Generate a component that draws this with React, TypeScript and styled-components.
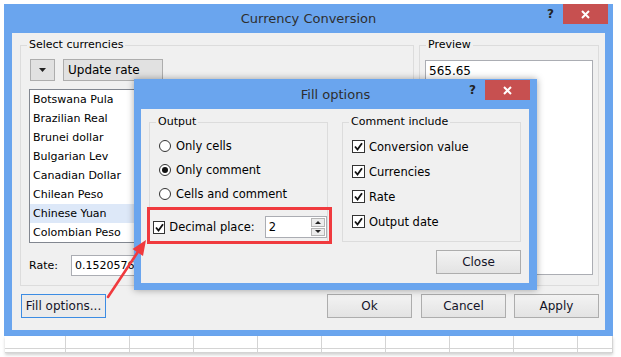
import styled, { createGlobalStyle } from "styled-components";

const GlobalStyle = createGlobalStyle`
  html, body {
    margin: 0;
    padding: 0;
    background: #ffffff;
  }
  body {
    font-family: "DejaVu Sans", Verdana, sans-serif;
    font-size: 11px;
    color: #000;
  }
`;

const Page = styled.div`
  position: relative;
  width: 621px;
  height: 357px;
  overflow: hidden;
  padding: 4px 0 0 4px;
  box-sizing: border-box;
  background: #fff;
`;

const Window = styled.div`
  width: 609px;
  background: #6aa5ee;
  display: flex;
  flex-direction: column;
`;

const TitleBar = styled.div<{ $h: number }>`
  height: ${(p) => p.$h}px;
  display: grid;
  grid-template-columns: 1fr auto 1fr;
  align-items: start;
`;

const Title = styled.div`
  align-self: center;
  font-size: 13px;
  color: #2e2e2e;
`;

const Controls = styled.div<{ $right: number; $top: number }>`
  justify-self: end;
  display: flex;
  align-items: flex-start;
  margin-right: ${(p) => p.$right}px;
  margin-top: ${(p) => p.$top}px;
`;

const HelpMark = styled.span`
  height: 20px;
  line-height: 20px;
  font-size: 12px;
  font-weight: bold;
  color: #222;
  margin-right: 9px;
`;

const CloseBox = styled.div`
  width: 45px;
  height: 20px;
  background: #c75050;
  display: flex;
  align-items: center;
  justify-content: center;
`;

const Body = styled.div`
  margin: 0 8px 6px 8px;
  height: 297px;
  background: #f0f0f0;
  padding: 12px 6px 0 8px;
  box-sizing: border-box;
`;

const GroupRow = styled.div<{ $gap: number }>`
  display: flex;
  gap: ${(p) => p.$gap}px;
`;

const GroupBox = styled.div<{ $w: number; $h: number }>`
  width: ${(p) => p.$w}px;
  height: ${(p) => p.$h}px;
  border: 1px solid #dcdcdc;
  box-sizing: border-box;
`;

const Legend = styled.div`
  width: fit-content;
  margin: -8px 0 0 6px;
  padding: 0 2px;
  line-height: 14px;
  background: #f0f0f0;
`;

const GroupContent = styled.div<{ $pad: string }>`
  padding: ${(p) => p.$pad};
`;

const ToolRow = styled.div`
  display: flex;
  gap: 8px;
  margin-left: 1px;
`;

const FlatButton = styled.div<{ $w: number }>`
  width: ${(p) => p.$w}px;
  height: 22px;
  box-sizing: border-box;
  border: 1px solid #adadad;
  background: #e1e1e1;
  display: flex;
  align-items: center;
  justify-content: ${(p) => (p.$w < 40 ? "center" : "flex-start")};
  padding-left: ${(p) => (p.$w < 40 ? 0 : 4)}px;
  font-size: 12px;
`;

const ListBox = styled.div`
  margin-top: 8px;
  width: 200px;
  height: 154px;
  box-sizing: border-box;
  border: 1px solid #828790;
  background: #fff;
`;

const ListItem = styled.div<{ $selected?: boolean }>`
  height: 19px;
  line-height: 19px;
  padding-left: 3px;
  background: ${(p) => (p.$selected ? "#dde8f8" : "transparent")};
  white-space: nowrap;
`;

const RateRow = styled.div`
  margin-top: 12px;
  display: flex;
  align-items: center;
`;

const RateLabel = styled.span`
  width: 42px;
`;

const TextInput = styled.div<{ $w: number; $h: number }>`
  width: ${(p) => p.$w}px;
  height: ${(p) => p.$h}px;
  box-sizing: border-box;
  border: 1px solid #abadb3;
  background: #fff;
  padding-left: 3px;
  display: flex;
  align-items: center;
  position: relative;
`;

const PreviewBox = styled.div`
  margin: 8px 5px 0 5px;
  height: 215px;
  box-sizing: border-box;
  border: 1px solid #abadb3;
  background: #fff;
  padding: 3px 3px;
  line-height: 14px;
  font-size: 12px;
`;

const ButtonRow = styled.div`
  margin-top: 8px;
  display: flex;
  align-items: center;
`;

const PushButton = styled.div<{ $focused?: boolean; $gap?: number }>`
  width: 85px;
  height: 24px;
  box-sizing: border-box;
  margin-left: ${(p) => p.$gap ?? 0}px;
  border: 1px solid ${(p) => (p.$focused ? "#3c8ce3" : "#adadad")};
  background: ${(p) =>
    p.$focused ? "#ebebeb" : "linear-gradient(#f3f3f3, #e3e3e3)"};
  display: flex;
  align-items: center;
  justify-content: center;
  color: #141428;
  font-size: 12px;
`;

const Spacer = styled.div`
  flex: 1;
`;

const FillWindow = styled.div`
  position: absolute;
  left: 134px;
  top: 79px;
  width: 403px;
  height: 211px;
  background: #6aa5ee;
  box-shadow: 0 0 7px rgba(0, 0, 0, 0.35);
  display: flex;
  flex-direction: column;
`;

const FillBody = styled.div`
  flex: 1;
  margin: 0 8px 7px 7px;
  background: #f0f0f0;
  padding: 13px 8px 0 8px;
  box-sizing: border-box;
`;

const OptionRow = styled.div<{ $h: number }>`
  height: ${(p) => p.$h}px;
  display: flex;
  align-items: center;
  white-space: nowrap;
  font-size: 11.5px;
`;

const Radio = styled.span<{ $checked?: boolean }>`
  width: 12px;
  height: 12px;
  box-sizing: border-box;
  border-radius: 50%;
  border: 1px solid #333;
  background: #fff;
  margin-right: 5px;
  display: flex;
  align-items: center;
  justify-content: center;
  &::after {
    content: "";
    width: 6px;
    height: 6px;
    border-radius: 50%;
    background: ${(p) => (p.$checked ? "#111" : "transparent")};
  }
`;

const CheckBox = styled.span`
  width: 13px;
  height: 13px;
  box-sizing: border-box;
  border: 1px solid #333;
  background: #fff;
  margin-right: 4px;
  display: flex;
  align-items: center;
  justify-content: center;
`;

const DecimalRow = styled(OptionRow)`
  margin: 10px 0 0 -6px;
`;

const SpinBox = styled(TextInput)`
  margin-left: 10px;
`;

const SpinButtons = styled.div`
  position: absolute;
  right: 1px;
  top: 1px;
  bottom: 1px;
  width: 14px;
  display: flex;
  flex-direction: column;
  gap: 1px;
`;

const SpinButton = styled.div`
  flex: 1;
  border: 1px solid #b5b5b5;
  background: #ececec;
  display: flex;
  align-items: center;
  justify-content: center;
`;

const CloseRow = styled.div`
  margin-top: 8px;
  display: flex;
  justify-content: flex-end;
`;

const Highlight = styled.div`
  position: absolute;
  left: 147px;
  top: 207px;
  width: 185px;
  height: 37px;
  box-sizing: border-box;
  border: 3px solid #f03a3e;
`;

const Annotation = styled.svg`
  position: absolute;
  left: 0;
  top: 0;
  pointer-events: none;
`;

const Sheet = styled.div`
  margin-left: 1px;
  width: 608px;
  box-shadow: 0 2px 3px rgba(0, 0, 0, 0.18);
`;

const SheetRow = styled.div<{ $h: number }>`
  display: flex;
  height: ${(p) => p.$h}px;
  border-bottom: 1px solid #d4d4d4;
  background: #fff;
`;

const SheetCell = styled.div<{ $w: number }>`
  width: ${(p) => p.$w}px;
  flex: none;
  border-right: 1px solid #d4d4d4;
  box-sizing: border-box;
`;

const currencies = [
  "Botswana Pula",
  "Brazilian Real",
  "Brunei dollar",
  "Bulgarian Lev",
  "Canadian Dollar",
  "Chilean Peso",
  "Chinese Yuan",
  "Colombian Peso",
];

const outputs = [
  { label: "Only cells", checked: false },
  { label: "Only comment", checked: true },
  { label: "Cells and comment", checked: false },
];

const includes = ["Conversion value", "Currencies", "Rate", "Output date"];

const cellWidths = [61, 64, 64, 64, 64, 64, 64, 64, 64, 35];

const CloseIcon = () => (
  <svg width="9" height="9" viewBox="0 0 9 9">
    <path d="M1 1 L8 8 M8 1 L1 8" stroke="#fff" strokeWidth="2" />
  </svg>
);

const Check = () => (
  <svg width="9" height="9" viewBox="0 0 9 9">
    <path d="M1 4.5 L3.5 7.5 L8 1.2" stroke="#111" strokeWidth="1.8" fill="none" />
  </svg>
);

const Tri = ({ up, w = 7, h = 4 }: { up?: boolean; w?: number; h?: number }) => (
  <svg width={w} height={h} viewBox={`0 0 ${w} ${h}`}>
    <path
      d={up ? `M0 ${h} L${w / 2} 0 L${w} ${h} Z` : `M0 0 L${w} 0 L${w / 2} ${h} Z`}
      fill="#222"
    />
  </svg>
);

function SheetRows() {
  return (
    <Sheet>
      {[12, 3].map((h, r) => (
        <SheetRow key={r} $h={h}>
          {cellWidths.map((w, i) => (
            <SheetCell key={i} $w={w} />
          ))}
        </SheetRow>
      ))}
    </Sheet>
  );
}

function FillOptions() {
  return (
    <FillWindow>
      <TitleBar $h={30}>
        <div />
        <Title>Fill options</Title>
        <Controls $right={7} $top={1}>
          <HelpMark>?</HelpMark>
          <CloseBox>
            <CloseIcon />
          </CloseBox>
        </Controls>
      </TitleBar>
      <FillBody>
        <GroupRow $gap={14}>
          <GroupBox $w={179} $h={120}>
            <Legend>Output</Legend>
            <GroupContent $pad="5px 0 0 9px">
              {outputs.map((o) => (
                <OptionRow key={o.label} $h={24}>
                  <Radio $checked={o.checked} />
                  {o.label}
                </OptionRow>
              ))}
              <DecimalRow $h={22}>
                <CheckBox>
                  <Check />
                </CheckBox>
                Decimal place:
                <SpinBox $w={66} $h={22}>
                  2
                  <SpinButtons>
                    <SpinButton>
                      <Tri up w={6} h={3} />
                    </SpinButton>
                    <SpinButton>
                      <Tri w={6} h={3} />
                    </SpinButton>
                  </SpinButtons>
                </SpinBox>
              </DecimalRow>
            </GroupContent>
          </GroupBox>
          <GroupBox $w={180} $h={120}>
            <Legend>Comment include</Legend>
            <GroupContent $pad="5px 0 0 9px">
              {includes.map((c) => (
                <OptionRow key={c} $h={25}>
                  <CheckBox>
                    <Check />
                  </CheckBox>
                  {c}
                </OptionRow>
              ))}
            </GroupContent>
          </GroupBox>
        </GroupRow>
        <CloseRow>
          <PushButton>Close</PushButton>
        </CloseRow>
      </FillBody>
    </FillWindow>
  );
}

export default function App() {
  return (
    <>
      <GlobalStyle />
      <Page>
        <Window>
          <TitleBar $h={29}>
            <div />
            <Title>Currency Conversion</Title>
            <Controls $right={5} $top={0}>
              <HelpMark>?</HelpMark>
              <CloseBox>
                <CloseIcon />
              </CloseBox>
            </Controls>
          </TitleBar>
          <Body>
            <GroupRow $gap={5}>
              <GroupBox $w={394} $h={241}>
                <Legend>Select currencies</Legend>
                <GroupContent $pad="7px 0 0 8px">
                  <ToolRow>
                    <FlatButton $w={25}>
                      <Tri />
                    </FlatButton>
                    <FlatButton $w={100}>Update rate</FlatButton>
                  </ToolRow>
                  <ListBox>
                    {currencies.map((c) => (
                      <ListItem key={c} $selected={c === "Chinese Yuan"}>
                        {c}
                      </ListItem>
                    ))}
                  </ListBox>
                  <RateRow>
                    <RateLabel>Rate:</RateLabel>
                    <TextInput $w={120} $h={21}>
                      0.1520576
                    </TextInput>
                  </RateRow>
                </GroupContent>
              </GroupBox>
              <GroupBox $w={180} $h={241}>
                <Legend>Preview</Legend>
                <PreviewBox>565.65</PreviewBox>
              </GroupBox>
            </GroupRow>
            <ButtonRow>
              <PushButton $focused $gap={1}>
                Fill options...
              </PushButton>
              <Spacer />
              <PushButton>Ok</PushButton>
              <PushButton $gap={9}>Cancel</PushButton>
              <PushButton $gap={8}>Apply</PushButton>
            </ButtonRow>
          </Body>
        </Window>
        <SheetRows />
        <FillOptions />
        <Highlight />
        <Annotation width="621" height="357" viewBox="0 0 621 357">
          <path d="M108 297 L138.5 251" stroke="#f03a3e" strokeWidth="2.6" strokeLinecap="round" />
          <polygon points="146,240 132.5,249 143,256" fill="#f03a3e" />
        </Annotation>
      </Page>
    </>
  );
}
